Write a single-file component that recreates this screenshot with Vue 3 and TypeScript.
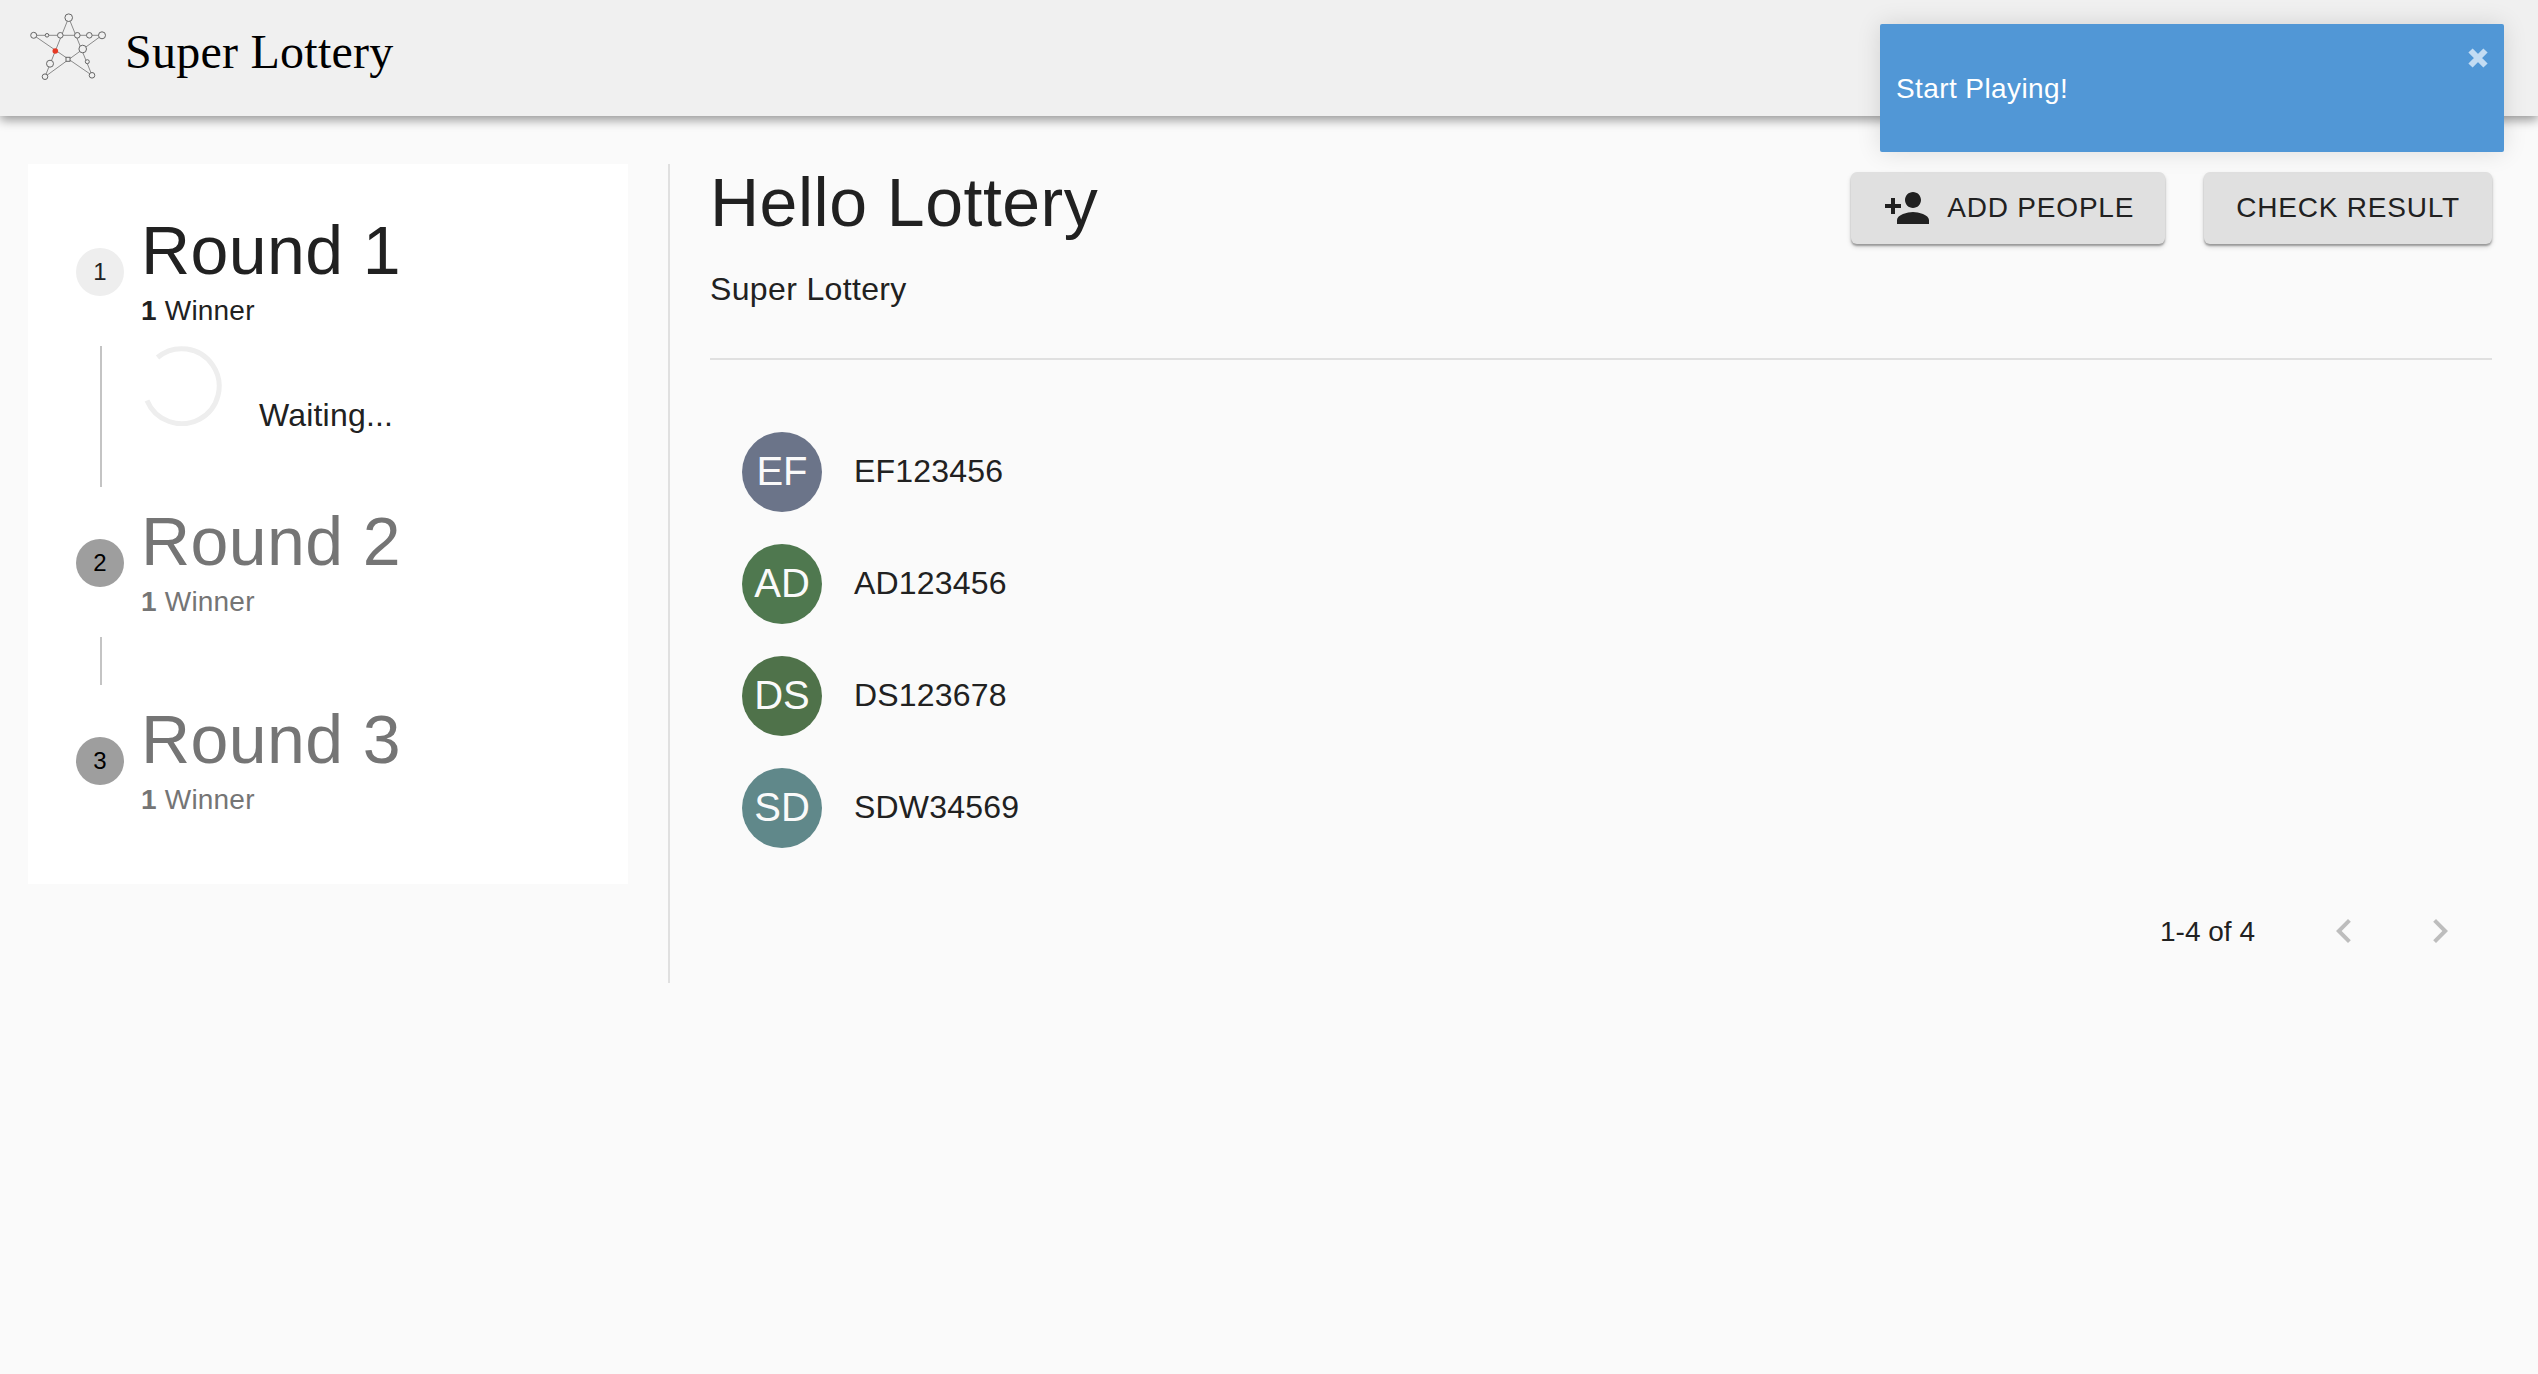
<script setup lang="ts">
interface Round {
  id: number;
  title: string;
  winners: number;
  active: boolean;
}

interface Player {
  code: string;
  initials: string;
  color: string;
}

const rounds: Round[] = [
  { id: 1, title: 'Round 1', winners: 1, active: true },
  { id: 2, title: 'Round 2', winners: 1, active: false },
  { id: 3, title: 'Round 3', winners: 1, active: false },
];

const players: Player[] = [
  { code: 'EF123456', initials: 'EF', color: '#6b7489' },
  { code: 'AD123456', initials: 'AD', color: '#4f784f' },
  { code: 'DS123678', initials: 'DS', color: '#4f724a' },
  { code: 'SDW34569', initials: 'SD', color: '#60888a' },
];

// logo graph, coordinates inside the 85x75 svg
const logoLines = [
  'M43.7 7.7 L20 66.7',
  'M43.7 7.7 L67 65.3',
  'M8.7 25.3 H77',
  'M8.7 25.3 L67 65.3',
  'M77 25.3 L20 66.7',
];
const logoNodes = [
  [43.7, 7.7, 3.8],
  [8.7, 25.3, 3],
  [22, 25.3, 1.8],
  [35.3, 25.3, 2.8],
  [52.3, 25.3, 2.8],
  [64.3, 25.3, 2.8],
  [77, 25.3, 3.5],
  [57.7, 39, 3.8],
  [62.3, 51.7, 2],
  [25, 53.7, 3.5],
  [67, 65.3, 2.8],
  [20, 66.7, 2.8],
];
</script>

<template>
  <div class="page">
    <header class="topbar">
      <svg class="logo" width="85" height="75" viewBox="0 0 85 75">
        <path v-for="d in logoLines" :key="d" :d="d" fill="none" stroke="#8a8a8a" stroke-width="1" />
        <circle
          v-for="n in logoNodes"
          :key="`${n[0]}-${n[1]}`"
          :cx="n[0]"
          :cy="n[1]"
          :r="n[2]"
          fill="#f0f0f0"
          stroke="#666"
          stroke-width="1"
        />
        <rect x="41" y="47.3" width="4" height="4" fill="#f0f0f0" stroke="#666" stroke-width="1" />
        <circle cx="30.3" cy="41" r="2.8" fill="#e53a25" />
      </svg>
      <span class="brand">Super Lottery</span>
    </header>

    <div class="toast">
      <span>Start Playing!</span>
      <svg class="toast-close" width="22" height="22" viewBox="0 0 22 22">
        <path d="M3.5 3.5 L18.5 18.5 M18.5 3.5 L3.5 18.5" fill="none" stroke="#c3dcf3" stroke-width="6" />
      </svg>
    </div>

    <div class="content">
      <aside class="stepper">
        <div v-for="(round, i) in rounds" :key="round.id" class="step" :class="{ inactive: !round.active }">
          <div class="step-head">
            <span class="step-dot">{{ round.id }}</span>
            <div class="step-text">
              <div class="step-title">{{ round.title }}</div>
              <div class="step-sub"><b>{{ round.winners }}</b> Winner</div>
            </div>
          </div>
          <div v-if="i < rounds.length - 1" class="step-line">
            <div v-if="round.active" class="waiting">
              <svg class="spinner" width="80" height="80" viewBox="0 0 80 80">
                <path d="M15.5 11.5 A37.5 37.5 0 1 1 5 54.5" fill="none" stroke="#eeeeee" stroke-width="5" />
              </svg>
              <span class="waiting-text">Waiting...</span>
            </div>
          </div>
        </div>
      </aside>

      <main class="main">
        <div class="main-head">
          <div>
            <h1 class="main-title">Hello Lottery</h1>
            <p class="main-sub">Super Lottery</p>
          </div>
          <div class="actions">
            <button class="btn btn-icon">
              <svg width="48" height="48" viewBox="0 0 24 24">
                <path
                  fill="#212121"
                  d="M15 12c2.21 0 4-1.79 4-4s-1.79-4-4-4-4 1.79-4 4 1.79 4 4 4zm-9-2V7H4v3H1v2h3v3h2v-3h3v-2H6zm9 4c-2.67 0-8 1.34-8 4v2h16v-2c0-2.66-5.33-4-8-4z"
                />
              </svg>
              ADD PEOPLE
            </button>
            <button class="btn">CHECK RESULT</button>
          </div>
        </div>
        <hr class="rule" />
        <ul class="players">
          <li v-for="p in players" :key="p.code" class="player">
            <span class="avatar" :style="{ background: p.color }">{{ p.initials }}</span>
            <span class="player-code">{{ p.code }}</span>
          </li>
        </ul>
        <div class="pager">
          <span class="pager-label">1-4 of 4</span>
          <span class="pager-btn">
            <svg width="48" height="48" viewBox="0 0 24 24">
              <path fill="#bdbdbd" d="M15.41 7.41L14 6l-6 6 6 6 1.41-1.41L10.83 12z" />
            </svg>
          </span>
          <span class="pager-btn">
            <svg width="48" height="48" viewBox="0 0 24 24">
              <path fill="#bdbdbd" d="M10 6L8.59 7.41 13.17 12l-4.58 4.59L10 18l6-6z" />
            </svg>
          </span>
        </div>
      </main>
    </div>
  </div>
</template>

<style scoped>
.page {
  position: relative;
  min-height: 100vh;
  background: #fafafa;
  color: #212121;
  font-family: 'Liberation Sans', Arial, sans-serif;
}

.topbar {
  display: flex;
  align-items: flex-start;
  box-sizing: border-box;
  height: 116px;
  padding: 10px 0 0 25px;
  background: #f0f0f0;
  box-shadow: 0 4px 10px rgba(0, 0, 0, 0.4);
}

.brand {
  margin: 14px 0 0 15px;
  font-family: 'Liberation Serif', 'Times New Roman', serif;
  font-size: 48px;
  line-height: 56px;
  letter-spacing: 0.25px;
  color: #000;
}

.toast {
  position: absolute;
  top: 24px;
  left: 1880px;
  display: flex;
  align-items: center;
  box-sizing: border-box;
  width: 624px;
  height: 128px;
  padding: 2px 0 0 16px;
  border-radius: 2px;
  background: #5197d6;
  color: #fff;
  font-size: 28px;
  line-height: 32px;
  letter-spacing: 0.4px;
  box-shadow: 0 0 24px rgba(0, 0, 0, 0.12);
}

.toast-close {
  position: absolute;
  top: 23px;
  right: 15px;
}

.content {
  display: flex;
  align-items: flex-start;
  padding: 48px 46px 0 28px;
}

.stepper {
  box-sizing: border-box;
  flex: 0 0 600px;
  height: 720px;
  padding: 52px 48px 0;
  background: #fff;
}

.step-head {
  display: flex;
  align-items: center;
  gap: 17px;
}

.step-dot {
  display: flex;
  align-items: center;
  justify-content: center;
  flex: 0 0 48px;
  height: 48px;
  border-radius: 50%;
  background: #eeeeee;
  color: #212121;
  font-size: 24px;
}

.inactive .step-dot {
  background: #9e9e9e;
  color: #000;
}

.step-title {
  font-size: 68px;
  line-height: 68px;
  letter-spacing: 0.4px;
}

.step-sub {
  margin-top: 11px;
  font-size: 28px;
  line-height: 32px;
  letter-spacing: 0.2px;
}

.inactive .step-title,
.inactive .step-sub {
  color: #757575;
}

.step-line {
  box-sizing: border-box;
  min-height: 48px;
  margin: 19px 0 20px 24px;
  padding-left: 40px;
  border-left: 2px solid #c4c4c4;
}

.waiting {
  display: flex;
  align-items: flex-start;
  gap: 37px;
  height: 141px;
}

.spinner {
  flex: none;
}

.waiting-text {
  margin-top: 53px;
  font-size: 32px;
  line-height: 32px;
  letter-spacing: 0.2px;
}

.main {
  flex: 1;
  box-sizing: border-box;
  height: 819px;
  margin-left: 40px;
  padding: 4px 0 0 40px;
  border-left: 2px solid #e0e0e0;
}

.main-head {
  display: flex;
  justify-content: space-between;
  align-items: flex-start;
}

.main-title {
  margin: 0;
  font-size: 68px;
  font-weight: 400;
  line-height: 68px;
  letter-spacing: 0.5px;
}

.main-sub {
  margin: 35px 0 0;
  font-size: 32px;
  line-height: 36px;
  letter-spacing: 0.35px;
}

.actions {
  display: flex;
  gap: 39px;
  margin-top: 4px;
}

.btn {
  display: flex;
  align-items: center;
  box-sizing: border-box;
  height: 72px;
  padding: 0 32px;
  border: none;
  border-radius: 6px;
  background: #e0e0e0;
  color: #212121;
  font-family: inherit;
  font-size: 28px;
  letter-spacing: 0.8px;
  box-shadow: 0 2px 2px rgba(0, 0, 0, 0.3), 0 3px 5px rgba(0, 0, 0, 0.15);
}

.btn-icon {
  gap: 16px;
  padding-right: 31px;
}

.rule {
  height: 2px;
  margin: 51px 0 0;
  border: none;
  background: #e0e0e0;
}

.players {
  margin: 56px 0 0;
  padding: 0;
  list-style: none;
}

.player {
  display: flex;
  align-items: center;
  height: 112px;
  padding-left: 32px;
}

.avatar {
  display: flex;
  align-items: center;
  justify-content: center;
  flex: 0 0 80px;
  height: 80px;
  padding-bottom: 2px;
  box-sizing: border-box;
  border-radius: 50%;
  color: #fafafa;
  font-size: 40px;
}

.player-code {
  margin: -2px 0 0 32px;
  font-size: 32px;
  letter-spacing: 0.2px;
}

.pager {
  display: flex;
  align-items: center;
  justify-content: flex-end;
  height: 96px;
  margin-top: 19px;
  padding-right: 4px;
}

.pager-label {
  margin: 2px 41px 0 0;
  font-size: 28px;
  line-height: 32px;
}

.pager-btn {
  display: flex;
  align-items: center;
  justify-content: center;
  width: 96px;
  height: 96px;
}
</style>

<style>
body {
  background: #fafafa;
}
</style>
